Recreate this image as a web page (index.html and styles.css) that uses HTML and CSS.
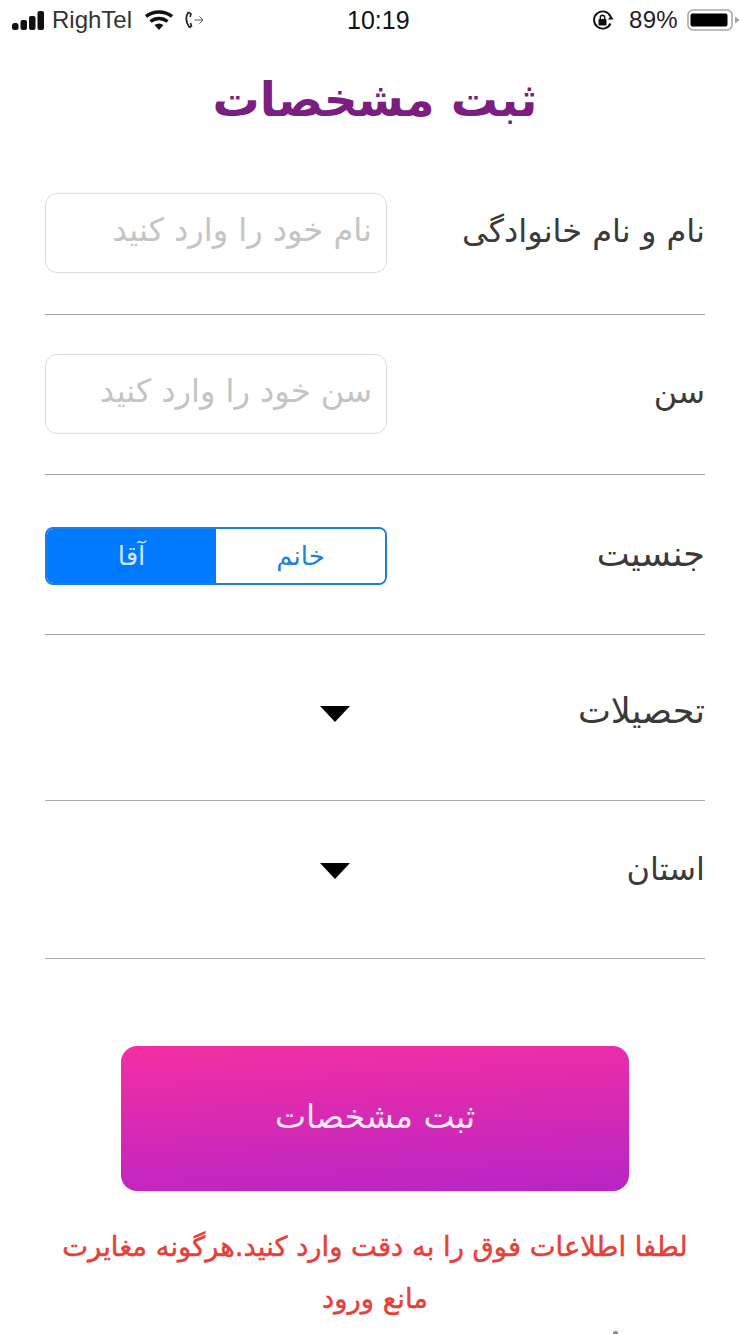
FILE: index.html
```html
<!DOCTYPE html>
<html lang="fa">
<head>
<meta charset="utf-8">
<title>ثبت مشخصات</title>
<link rel="stylesheet" href="styles.css">
</head>
<body>
<div class="screen">
  <header class="status">
    <div class="status-left">
      <svg class="signal" width="33" height="19" viewBox="0 0 33 19"><rect x="0" y="12" width="6.500" height="7" rx="2.500"/><rect x="8.500" y="9" width="6.500" height="10" rx="2"/><rect x="17" y="5" width="6.500" height="14" rx="2"/><rect x="25.500" y="0" width="6.500" height="19" rx="2"/></svg>
      <span class="carrier">RighTel</span>
      <svg class="wifi" width="28" height="20" viewBox="0 0 28 20"><path d="M1 6.500C8.500 .5 19.500 .5 27 6.500" fill="none" stroke="#111" stroke-width="3.400"/><path d="M5.500 11.500C10.500 7.500 17.500 7.500 22.500 11.500" fill="none" stroke="#111" stroke-width="3.400"/><path d="M9.500 15C12.500 13 15.500 13 18.500 15L14 20z" fill="#111"/></svg>
      <svg class="call" width="19" height="18" viewBox="0 0 19 18"><path d="M3.500 1C.5 5.500 .5 11 4.500 16.500" fill="none" stroke="#222" stroke-width="1.800"/><path d="M3.500 1L6 3 5 6M4.500 16.500L6.500 15 5.500 12" fill="none" stroke="#222" stroke-width="1.600"/><path d="M9.500 9H18M14.500 5.500L18 9 14.500 12.500" fill="none" stroke="#555" stroke-width="1"/></svg>
    </div>
    <div class="clock">10:19</div>
    <div class="status-right">
      <svg class="lock" width="22" height="20" viewBox="0 0 22 20"><path d="M18.500 13.500A8.600 8.600 0 1 1 18.500 6.500" fill="none" stroke="#111" stroke-width="1.900"/><path d="M21.500 9.500H16L19 5.500z" fill="#111"/><rect x="6.500" y="9" width="8" height="6.500" rx="1" fill="#111"/><path d="M8.300 9V7.500a2.200 2.200 0 0 1 4.400 0V9" fill="none" stroke="#111" stroke-width="1.400"/></svg>
      <span class="percent">89%</span>
      <svg class="battery" width="53" height="22" viewBox="0 0 53 22"><rect x="1" y="1" width="44" height="20" rx="5" fill="none" stroke="#a8a8a8" stroke-width="1.600"/><rect x="3.500" y="4.500" width="37" height="13" rx="2" fill="#000"/><path d="M48 7.500L52.500 11 48 14.500z" fill="#a0a0a0"/></svg>
    </div>
  </header>

  <h1 class="title" dir="rtl">ثبت مشخصات</h1>

  <main class="form">
    <section class="row row-name">
      <input class="field" dir="rtl" type="text" placeholder="نام خود را وارد کنید">
      <label class="label" dir="rtl">نام و نام خانوادگی</label>
    </section>
    <section class="row row-age">
      <input class="field" dir="rtl" type="text" placeholder="سن خود را وارد کنید">
      <label class="label" dir="rtl">سن</label>
    </section>
    <section class="row row-gender">
      <div class="segment" dir="rtl">
        <span class="seg-item">خانم</span>
        <span class="seg-item seg-active">آقا</span>
      </div>
      <label class="label" dir="rtl">جنسیت</label>
    </section>
    <section class="row row-edu">
      <div class="picker"><span class="arrow"></span></div>
      <label class="label" dir="rtl">تحصیلات</label>
    </section>
    <section class="row row-state">
      <div class="picker"><span class="arrow"></span></div>
      <label class="label" dir="rtl">استان</label>
    </section>
  </main>

  <div class="action">
    <button class="submit" type="button" dir="rtl">ثبت مشخصات</button>
  </div>
  <p class="note" dir="rtl">لطفا اطلاعات فوق را به دقت وارد کنید.هرگونه مغایرت<br>مانع ورود</p>
</div>
</body>
</html>
```
FILE: styles.css
```css
* { box-sizing: border-box; }
html, body { margin: 0; padding: 0; background: #fff; }
body { font-family: "DejaVu Sans", "Noto Sans", sans-serif; }
.screen { width: 750px; height: 1334px; overflow: hidden; position: relative; }

.status { height: 40px; display: flex; align-items: center; justify-content: space-between; padding: 0 10px 0 12px; position: relative; font-family: "Liberation Sans", sans-serif; color: #111; font-size: 24px; }
.status-left, .status-right { display: flex; align-items: center; }
.signal { fill: #111; margin-right: 7px; }
.carrier { font-size: 24px; color: #333; }
.wifi { margin-left: 13px; }
.call { margin-left: 12px; }
.clock { position: absolute; left: 347px; top: 6px; font-size: 25px; }
.lock { margin-right: 15px; }
.percent { margin-right: 9px; font-size: 24px; letter-spacing: .3px; color: #222; }

.title { margin: 0; height: 113px; padding-top: 25px; text-align: center; font-size: 47px; line-height: 70px; font-weight: bold; color: #7a1f80; }

.form { margin: 0 45px; }
.row { display: flex; justify-content: space-between; border-bottom: 1.500px solid #a9a9a9; }
.row-name { height: 162px; padding-top: 40px; }
.row-age { height: 160px; padding-top: 39px; }
.row-gender { height: 160px; padding-top: 52px; }
.row-edu { height: 166px; padding-top: 56px; }
.row-state { height: 158px; padding-top: 47px; }

.field { width: 342px; height: 80px; padding: 0 14px 6px; border: 1.500px solid #dcdcdc; border-radius: 12px; font-family: inherit; font-size: 32px; background: #fff; outline: none; }
.field::placeholder { color: #c4c4c4; }

.label { font-size: 32px; color: #3a3a3a; line-height: 76px; height: 80px; }
.row-gender .label { font-size: 35px; line-height: 54px; height: 58px; }
.row-edu .label { font-size: 35px; line-height: 40px; height: 44px; }
.row-state .label { line-height: 42px; height: 44px; }

.segment { width: 342px; height: 58px; display: flex; flex-direction: row; border: 2px solid #1f7fe0; border-radius: 8px; overflow: hidden; font-size: 26px; }
.seg-item { flex: 1; display: flex; align-items: center; justify-content: center; color: #1d82de; background: #fff; }
.seg-active { background: #007aff; color: #cfe6ff; }

.picker { width: 342px; height: 44px; display: flex; align-items: center; justify-content: flex-end; padding: 2px 37px 0 0; }
.arrow { width: 0; height: 0; border-left: 15px solid transparent; border-right: 15px solid transparent; border-top: 16px solid #000; }

.action { display: flex; justify-content: center; padding-top: 87px; }
.submit { width: 508px; height: 145px; padding: 0 0 4px; border: 0; border-radius: 16px; background: linear-gradient(177deg, #f42fa2 0%, #b824c6 100%); color: #fbeaf8; font-family: inherit; font-size: 33px; }

.note { margin: 30px 30px 0; text-align: center; font-size: 27.400px; line-height: 52px; color: #e5403a; -webkit-text-stroke: .5px #e5403a; }
.screen::after { content: ""; position: absolute; left: 613px; bottom: 0; width: 5px; height: 3px; background: #c9726c; border-radius: 2px 2px 0 0; }
```
